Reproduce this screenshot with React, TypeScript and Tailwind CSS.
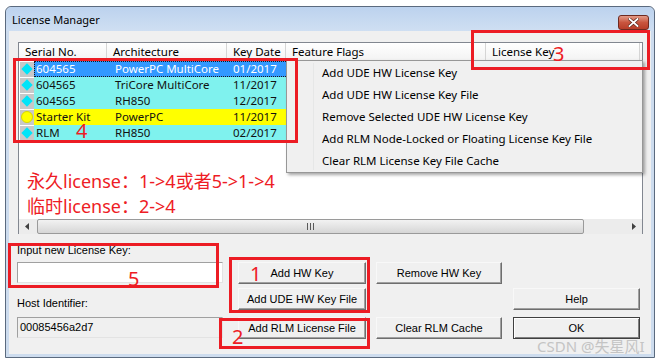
import React from 'react';

const rows = [
  { serial: '604565', arch: 'PowerPC MultiCore', date: '01/2017', kind: 'diamond', bg: 'bg-[#3399ff]', selected: true },
  { serial: '604565', arch: 'TriCore MultiCore', date: '11/2017', kind: 'diamond', bg: 'bg-[#7ff2ee]', selected: false },
  { serial: '604565', arch: 'RH850', date: '12/2017', kind: 'diamond', bg: 'bg-[#7ff2ee]', selected: false },
  { serial: 'Starter Kit', arch: 'PowerPC', date: '11/2017', kind: 'circle', bg: 'bg-[#ffff00]', selected: false },
  { serial: 'RLM', arch: 'RH850', date: '02/2017', kind: 'diamond', bg: 'bg-[#7ff2ee]', selected: false },
];

const menuItems = [
  'Add UDE HW License Key',
  'Add UDE HW License Key File',
  'Remove Selected UDE HW License Key',
  'Add RLM Node-Locked or Floating License Key File',
  'Clear RLM License Key File Cache',
];

function WinButton({ label, isDefault = false }: { label: string; isDefault?: boolean }) {
  return (
    <div
      className={`h-[22px] flex items-center justify-center bg-[#f0f0f0] text-[11px] text-black ${
        isDefault
          ? 'border border-[#404040] shadow-[inset_1px_1px_0_#ffffff,inset_-1px_-1px_0_#808080]'
          : 'border border-t-[#f8f8f8] border-l-[#f8f8f8] border-r-[#6e6e6e] border-b-[#6e6e6e] shadow-[inset_-1px_-1px_0_#a0a0a0]'
      }`}
    >
      {label}
    </div>
  );
}

function RedBox({ className }: { className: string }) {
  return <div className={`absolute border-[3px] border-[#ec1c24] pointer-events-none ${className}`} />;
}

export default function App() {
  return (
    <div className="relative w-[667px] h-[364px] bg-white overflow-hidden font-['Liberation_Sans',sans-serif]">
      {/* Window */}
      <div className="ml-[5px] mt-[6px] w-[650px] h-[352px] flex flex-col border border-[#5b6a7e] rounded-t-[6px] bg-[#cddcee]">
        {/* Title bar */}
        <div className="h-[24px] flex items-center justify-between pl-[6px] pr-[5px] rounded-t-[6px] bg-gradient-to-b from-[#bcd2ee] to-[#cfdff2]">
          <span className="text-[11px] text-black font-['Noto_Sans',sans-serif] pt-[2px]">License Manager</span>
          <div className="w-[31px] h-[15px] mt-[6px] rounded-[3px] border border-[#6e2a20] bg-gradient-to-b from-[#e29a88] via-[#c9553e] to-[#b83d28] flex items-center justify-center">
            <svg width="11" height="9" viewBox="0 0 11 9">
              <path d="M1.5 1 L9.5 8 M9.5 1 L1.5 8" stroke="#5a2418" strokeWidth="3.2" strokeLinecap="square" />
              <path d="M1.5 1 L9.5 8 M9.5 1 L1.5 8" stroke="#ffffff" strokeWidth="1.8" strokeLinecap="square" />
            </svg>
          </div>
        </div>

        {/* Client area */}
        <div className="flex-1 mx-[3px] mb-[3px] bg-[#f0f0f0] pl-[9px] pt-[11px] flex flex-col">
          {/* List view */}
          <div className="w-[625px] h-[192px] border border-[#828790] bg-white flex flex-col font-['Noto_Sans',sans-serif] text-[11.5px]">
            {/* Header */}
            <div className="h-[18px] flex border-b border-[#e5e5e5] bg-gradient-to-b from-white to-[#f3f3f3] text-black leading-[18px]">
              <div className="w-[88px] border-r border-[#d5d5d5] pl-[6px]">Serial No.</div>
              <div className="w-[120px] border-r border-[#d5d5d5] pl-[6px]">Architecture</div>
              <div className="w-[59px] border-r border-[#d5d5d5] pl-[6px]">Key Date</div>
              <div className="w-[200px] border-r border-[#d5d5d5] pl-[6px]">Feature Flags</div>
              <div className="w-[154px] border-r border-[#d5d5d5] pl-[6px]">License Key</div>
            </div>

            {/* Rows */}
            <div className="flex flex-col">
              {rows.map((r, i) => (
                <div key={i} className="h-[16px] flex items-center leading-[16px]">
                  <div className="w-[14px] h-[15px] ml-[1px] bg-[#c8c8c8] flex items-center justify-center">
                    {r.kind === 'diamond' ? (
                      <div className="w-[8px] h-[8px] rotate-45 bg-[#00e4f8]" />
                    ) : (
                      <div className="w-[12px] h-[12px] rounded-full bg-[#ffff00] border border-[#d8d800]" />
                    )}
                  </div>
                  <div
                    className={`flex-1 h-[16px] flex ${r.bg} ${
                      r.selected ? 'text-white outline outline-1 outline-dotted outline-[#1a1a1a] -outline-offset-1' : 'text-[#111111]'
                    }`}
                  >
                    <div className="w-[73px] pl-[2px]">{r.serial}</div>
                    <div className="w-[120px] pl-[8px]">{r.arch}</div>
                    <div className="w-[60px] pl-[6px]">{r.date}</div>
                  </div>
                </div>
              ))}
            </div>

            {/* Empty area with notes */}
            <div className="flex-1 pl-[8px] pt-[28px] text-[18px] leading-[25px] text-[#ee1c25] font-['Noto_Sans','Noto_Sans_CJK_SC',sans-serif]">
              <div>永久license：1-&gt;4或者5-&gt;1-&gt;4</div>
              <div>临时license：2-&gt;4</div>
            </div>

            {/* Horizontal scrollbar */}
            <div className="h-[16px] flex items-center bg-[#ececec]">
              <div className="w-[17px] flex items-center justify-center">
                <svg width="5" height="7" viewBox="0 0 5 7"><path d="M4 0 L0 3.5 L4 7 Z" fill="#404040" /></svg>
              </div>
              <div className="w-[547px] h-[15px] ml-[1px] rounded-[2px] border border-[#9a9a9a] bg-gradient-to-b from-[#f2f2f2] to-[#d6d6d6] flex items-center justify-center">
                <svg width="7" height="7" viewBox="0 0 7 7">
                  <path d="M0.5 0 V7 M3.5 0 V7 M6.5 0 V7" stroke="#5a5a5a" strokeWidth="1" />
                </svg>
              </div>
              <div className="flex-1 flex items-center justify-end pr-[5px]">
                <svg width="5" height="7" viewBox="0 0 5 7"><path d="M0 0 L4 3.5 L0 7 Z" fill="#404040" /></svg>
              </div>
            </div>
          </div>

          {/* Bottom controls */}
          <div className="flex items-start -ml-[1px] pt-[10px]">
            <div className="w-[206px] flex flex-col">
              <div className="h-[13px] leading-[13px] text-[11px] text-black">Input new License Key:</div>
              <div className="mt-[5px] h-[21px] bg-white border border-t-[#a0a0a0] border-l-[#a0a0a0] border-r-[#e3e3e3] border-b-[#e3e3e3]" />
              <div className="mt-[14px] h-[13px] leading-[13px] text-[11px] text-black">Host Identifier:</div>
              <div className="mt-[7px] h-[21px] bg-[#f0f0f0] border border-t-[#a0a0a0] border-l-[#a0a0a0] border-r-[#e3e3e3] border-b-[#e3e3e3] pl-[2px] text-[11px] leading-[19px] text-black">
                00085456a2d7
              </div>
            </div>
            <div className="w-[128px] ml-[15px] flex flex-col pt-[18px]">
              <WinButton label="Add HW Key" />
              <div className="mt-[4px]"><WinButton label="Add UDE HW Key File" /></div>
              <div className="mt-[7px]"><WinButton label="Add RLM License File" /></div>
            </div>
            <div className="w-[126px] ml-[10px] flex flex-col pt-[18px]">
              <WinButton label="Remove HW Key" />
              <div className="mt-[33px]"><WinButton label="Clear RLM Cache" /></div>
            </div>
            <div className="w-[127px] ml-[11px] flex flex-col pt-[44px]">
              <WinButton label="Help" />
              <div className="mt-[7px]"><WinButton label="OK" isDefault /></div>
            </div>
          </div>
        </div>
      </div>

      {/* Popup menu over the list view */}
      <div className="absolute left-[286px] top-[60px] w-[357px] h-[113px] bg-[#f0f0f0] border border-[#979797] shadow-[2px_2px_3px_rgba(0,0,0,0.35)] pt-[1px] font-['Noto_Sans',sans-serif] text-[11.5px] text-black">
        <div className="absolute left-[26px] top-[2px] bottom-[2px] w-[1px] bg-[#e6e7e7]" />
        {menuItems.map((m) => (
          <div key={m} className="h-[22px] leading-[22px] pl-[35px]">{m}</div>
        ))}
      </div>

      {/* Annotations */}
      <RedBox className="left-[13px] top-[58px] w-[285px] h-[85px]" />
      <RedBox className="left-[471px] top-[30px] w-[179px] h-[40px]" />
      <RedBox className="left-[8px] top-[243px] w-[211px] h-[45px]" />
      <RedBox className="left-[229px] top-[257px] w-[141px] h-[56px]" />
      <RedBox className="left-[219px] top-[318px] w-[151px] h-[31px]" />

      <div className="absolute left-[553px] top-[42px] text-[20px] leading-[24px] text-[#ee1c25] font-['Noto_Sans',sans-serif]">3</div>
      <div className="absolute left-[76px] top-[119px] text-[20px] leading-[24px] text-[#ee1c25] font-['Noto_Sans',sans-serif]">4</div>
      <div className="absolute left-[128px] top-[267px] text-[20px] leading-[24px] text-[#ee1c25] font-['Noto_Sans',sans-serif]">5</div>
      <div className="absolute left-[250px] top-[262px] text-[20px] leading-[24px] text-[#ee1c25] font-['Noto_Sans',sans-serif]">1</div>
      <div className="absolute left-[232px] top-[325px] text-[20px] leading-[24px] text-[#ee1c25] font-['Noto_Sans',sans-serif]">2</div>

      {/* Watermark */}
      <div className="absolute left-[537px] top-[337px] text-[15px] leading-[18px] text-[#c4c4c4] font-['Noto_Sans','Noto_Sans_CJK_SC',sans-serif]">
        CSDN @失星风I
      </div>
    </div>
  );
}
